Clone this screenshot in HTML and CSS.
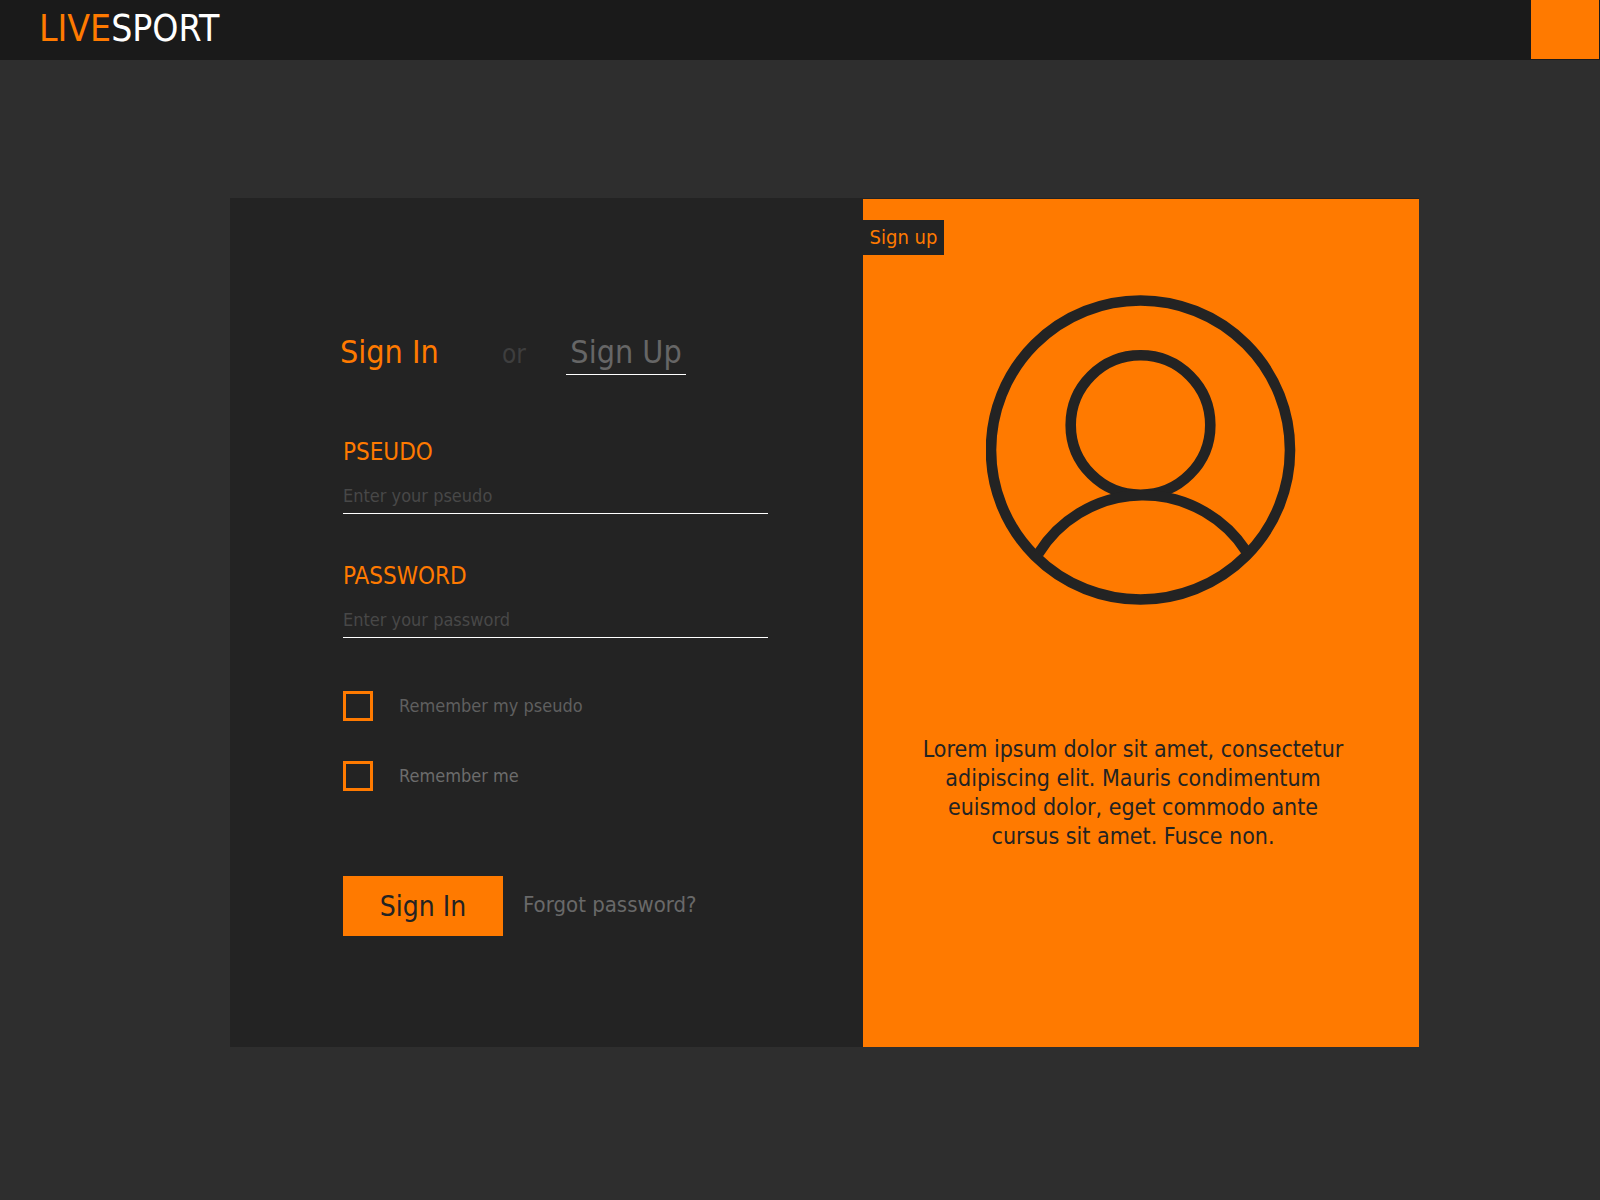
FILE: index.html
```html
<!DOCTYPE html>
<html lang="en">
<head>
<meta charset="utf-8">
<meta name="viewport" content="width=device-width, initial-scale=1">
<title>LiveSport - Sign In</title>
<link rel="stylesheet" href="styles.css">
</head>
<body>
<header class="topbar">
  <a class="brand" href="#"><span class="brand-accent">LIVE</span>SPORT</a>
  <button class="menu-button" type="button" aria-label="Menu"></button>
</header>
<main class="page">
  <div class="card">
    <section class="login">
      <div class="tabs">
        <h1 class="tab-current">Sign In</h1>
        <span class="tab-or">or</span>
        <a class="tab-link" href="#">Sign Up</a>
      </div>
      <form class="form">
        <div class="field">
          <label class="field-label" for="pseudo">PSEUDO</label>
          <input class="field-input" id="pseudo" type="text" placeholder="Enter your pseudo">
        </div>
        <div class="field">
          <label class="field-label" for="password">PASSWORD</label>
          <input class="field-input" id="password" type="password" placeholder="Enter your password">
        </div>
        <div class="checks">
          <div class="check">
            <input class="check-box" id="keep-pseudo" type="checkbox">
            <label class="check-label" for="keep-pseudo">Remember my pseudo</label>
          </div>
          <div class="check">
            <input class="check-box" id="keep-me" type="checkbox">
            <label class="check-label check-label-light" for="keep-me">Remember me</label>
          </div>
        </div>
        <div class="actions">
          <button class="submit" type="submit">Sign In</button>
          <a class="forgot" href="#">Forgot password?</a>
        </div>
      </form>
    </section>
    <aside class="promo">
      <a class="promo-tag" href="#">Sign up</a>
      <svg class="avatar" viewBox="0 0 310 310" fill="none" stroke="#232323" stroke-width="10.6" aria-hidden="true">
        <circle cx="154.5" cy="155" r="149.5"/>
        <circle cx="154.5" cy="130" r="69.8"/>
        <path d="M52.5 258.500A123 123 0 0 1 260 256"/>
      </svg>
      <p class="promo-text">Lorem ipsum dolor sit amet, consectetur adipiscing elit. Mauris condimentum euismod dolor, eget commodo ante cursus sit amet. Fusce non.</p>
    </aside>
  </div>
</main>
</body>
</html>
```
FILE: styles.css
```css
* {
  box-sizing: border-box;
}

body {
  margin: 0;
  min-height: 100vh;
  background: #2e2e2e;
  color: #232323;
  font-family: Tahoma, "DejaVu Sans Condensed", "DejaVu Sans", sans-serif;
}

a {
  text-decoration: none;
}

button,
input {
  font-family: inherit;
}

.topbar {
  display: flex;
  justify-content: space-between;
  height: 60px;
  padding: 0 1px 1px 39px;
  background: #1a1a1a;
}

.brand {
  color: #fff;
  font-size: 37px;
  line-height: 58px;
}

.brand-accent {
  color: #ff7a00;
}

.menu-button {
  width: 68px;
  border: 0;
  background: #ff7a00;
}

.page {
  padding: 138px 181px 138px 230px;
}

.card {
  display: grid;
  grid-template-columns: 633fr 556fr;
  min-height: 849px;
  background: #232323;
}

.login {
  padding: 137px 94px 96px 110px;
}

.tabs {
  display: flex;
  align-items: baseline;
}

.tab-current {
  margin: 0;
  min-width: 162px;
  color: #ff7a00;
  font-size: 32px;
  font-weight: 400;
  line-height: 35px;
}

.tab-or {
  min-width: 64px;
  color: #3e3e3e;
  font-size: 26px;
}

.tab-link {
  min-width: 120px;
  padding-bottom: 4px;
  border-bottom: 1px solid #fff;
  color: #666;
  font-size: 32px;
  line-height: 35px;
  text-align: center;
}

.form {
  display: flex;
  flex-direction: column;
  gap: 48px;
  padding: 63px 1px 0 3px;
}

.field {
  display: flex;
  flex-direction: column;
  gap: 15px;
}

.field-label {
  color: #ff7a00;
  font-size: 24px;
  line-height: 28px;
}

.field-input {
  width: 100%;
  height: 33px;
  padding: 0 0 4px;
  border: 0;
  border-bottom: 1px solid #fff;
  border-radius: 0;
  outline: 0;
  background: transparent;
  color: #fff;
  font-size: 18px;
}

.field-input::placeholder {
  color: #484848;
  opacity: 1;
}

.checks {
  display: flex;
  flex-direction: column;
  gap: 40px;
  padding: 5px 0 37px;
}

.check {
  display: flex;
  align-items: center;
  gap: 26px;
}

.check-box {
  appearance: none;
  width: 30px;
  height: 30px;
  margin: 0;
  border: 3px solid #ff7a00;
}

.check-box:checked {
  background: #ff7a00;
}

.check-label {
  padding-bottom: 2px;
  color: #5f5f5f;
  font-size: 18px;
}

.check-label-light {
  color: #6c6c6c;
}

.actions {
  display: flex;
  align-items: center;
  gap: 20px;
}

.submit {
  width: 160px;
  height: 60px;
  padding: 0;
  border: 0;
  background: #ff7a00;
  color: #232323;
  font-size: 28px;
}

.forgot {
  padding-bottom: 4px;
  color: #696969;
  font-size: 22px;
}

.promo {
  display: flex;
  flex-direction: column;
  align-items: center;
  margin-top: 1px;
  padding-top: 21px;
  background: #ff7a00;
}

.promo-tag {
  align-self: flex-start;
  min-width: 81px;
  background: #232323;
  color: #ff7a00;
  font-size: 20px;
  line-height: 35px;
  text-align: center;
}

.avatar {
  width: 310px;
  height: 310px;
  margin-top: 40px;
}

.promo-text {
  width: 100%;
  margin: 130px 0 0;
  padding: 0 68px 0 52px;
  font-size: 23px;
  line-height: 29px;
  text-align: center;
}
```
